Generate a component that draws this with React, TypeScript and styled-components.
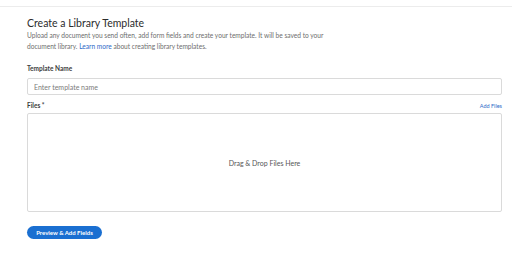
import React from "react";
import styled, { createGlobalStyle } from "styled-components";

const Global = createGlobalStyle`
  html, body { margin: 0; padding: 0; background: #fff; }
  body { font-family: Lato, "Open Sans", sans-serif; color: #2c2c2c; }
  * { box-sizing: border-box; }
`;

const Page = styled.div`
  width: 512px;
  height: 254px;
  display: flex;
  flex-direction: column;
  overflow: hidden;
`;

const TopBar = styled.div`
  height: 7px;
  border-bottom: 1px solid #ececec;
`;

const Content = styled.div`
  padding: 9px 10px 0 27px;
  display: flex;
  flex-direction: column;
`;

const Title = styled.h1`
  margin: 0;
  font-size: 10.5px;
  font-weight: 400;
  color: #2c2c2c;
  line-height: 14px;
`;

const Desc = styled.p`
  margin: 0;
  font-size: 6.6px;
  line-height: 10.5px;
  color: #6e6e6e;
  white-space: nowrap;
`;

const Link = styled.a`
  color: #2d6ac8;
  text-decoration: none;
`;

const Label = styled.div`
  font-size: 6.5px;
  font-weight: 700;
  color: #3c3c3c;
  line-height: 9px;
`;

const Field = styled.div<{ $mt: number }>`
  margin-top: ${(p) => p.$mt}px;
  display: flex;
  flex-direction: column;
`;

const Input = styled.input`
  margin-top: 5px;
  width: 475px;
  height: 17px;
  border: 1px solid #dadada;
  border-radius: 2px;
  padding: 0 6px;
  font-family: inherit;
  font-size: 7px;
  color: #333;
  outline: none;
  &::placeholder { color: #7a7a7a; font-size: 7px; }
`;

const LabelRow = styled.div`
  width: 475px;
  display: flex;
  justify-content: space-between;
  align-items: baseline;
`;

const AddFiles = styled.span`
  font-size: 5.5px;
  color: #2d6ac8;
`;

const Drop = styled.div`
  margin-top: 3px;
  width: 475px;
  height: 99px;
  border: 1px solid #dadada;
  border-radius: 2px;
  display: flex;
  align-items: center;
  justify-content: center;
  font-size: 7px;
  color: #555;
`;

const Button = styled.button`
  margin-top: 14px;
  width: 75px;
  height: 13px;
  border: none;
  border-radius: 7px;
  background: #1a6fd1;
  color: #fff;
  font-family: inherit;
  font-weight: 700;
  font-size: 6px;
  padding: 0;
  display: flex;
  align-items: center;
  justify-content: center;
`;

export default function App() {
  return (
    <Page>
      <Global />
      <TopBar />
      <Content>
        <Title>Create a Library Template</Title>
        <Desc>
          Upload any document you send often, add form fields and create your template. It will be saved to your
          <br />
          document library. <Link>Learn more</Link> about creating library templates.
        </Desc>
        <Field $mt={13}>
          <Label>Template Name</Label>
          <Input placeholder="Enter template name" />
        </Field>
        <Field $mt={6}>
          <LabelRow>
            <Label>Files *</Label>
            <AddFiles>Add Files</AddFiles>
          </LabelRow>
          <Drop>Drag &amp; Drop Files Here</Drop>
        </Field>
        <Button>Preview &amp; Add Fields</Button>
      </Content>
    </Page>
  );
}
